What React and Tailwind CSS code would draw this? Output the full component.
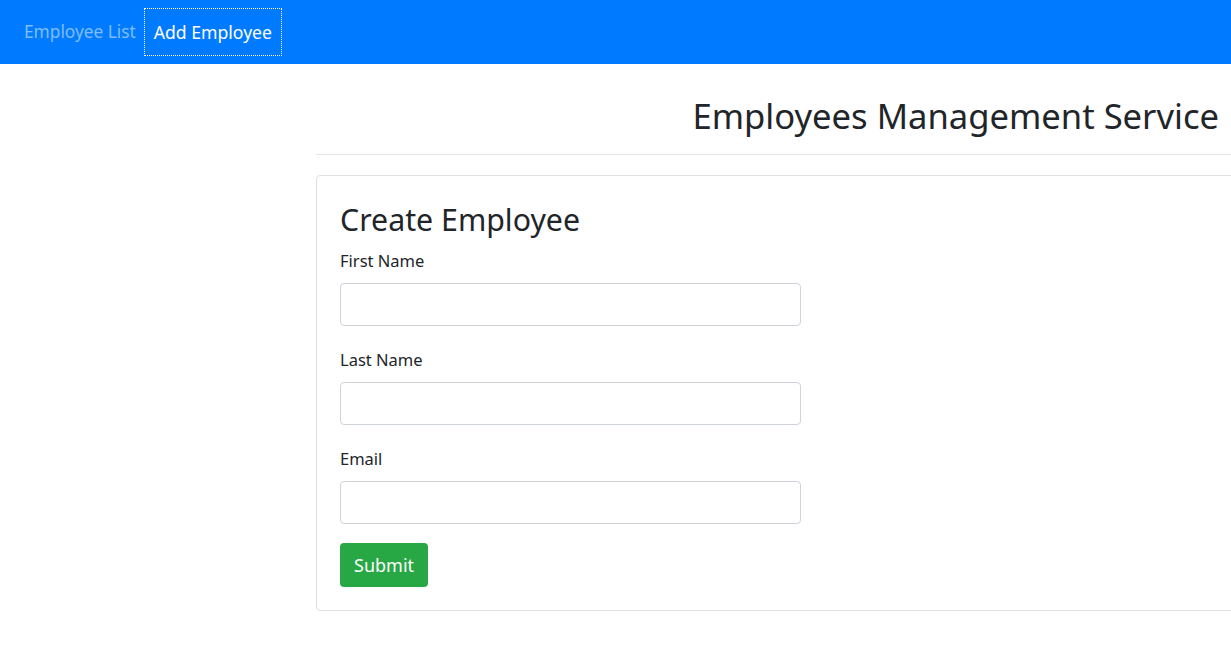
// Employee management: create employee form page
const FONT = { fontFamily: '"Noto Sans", "Open Sans", sans-serif' };

const FIELDS = ['First Name', 'Last Name', 'Email'];

function Field({ label }) {
  return (
    <div className="mb-[22px]">
      <label className="block text-[16.5px] leading-[24px] mb-[10px] text-[#212529]">{label}</label>
      <input
        type="text"
        className="block w-[461px] h-[43px] border border-[#ced4da] rounded-[4px] px-3 bg-white outline-none"
      />
    </div>
  );
}

export default function App() {
  return (
    <div className="w-[1231px] h-[658px] overflow-hidden bg-white text-[#212529]" style={FONT}>
      <nav className="h-[64px] bg-[#007bff] flex items-center pl-[14px]">
        <a className="pl-[10px] pr-[8px] text-[17.3px] text-white/50">Employee List</a>
        <a className="h-[48px] flex items-center px-[9px] text-[17.6px] text-white border border-dotted border-white">
          Add Employee
        </a>
      </nav>

      <main className="pl-[316px]">
        <div className="w-[915px] text-right pr-[12px] pt-[30px] pb-[16px]">
          <h1 className="text-[34.6px] leading-[44px] font-normal">Employees Management Service</h1>
        </div>
        <div className="w-[915px] border-t border-[#e5e5e5]" />
        <div className="mt-[20px] w-[960px] border border-[#dfdfdf] rounded-[4px] px-[23px] pt-[26px] pb-[23px]">
          <h3 className="text-[30.3px] leading-[36px] mb-[11px]">Create Employee</h3>
          {FIELDS.map((f) => (
            <Field key={f} label={f} />
          ))}
          <button className="-mt-[3px] h-[44px] px-[14px] bg-[#28a745] text-white text-[18px] rounded-[4px]">
            Submit
          </button>
        </div>
      </main>
    </div>
  );
}
